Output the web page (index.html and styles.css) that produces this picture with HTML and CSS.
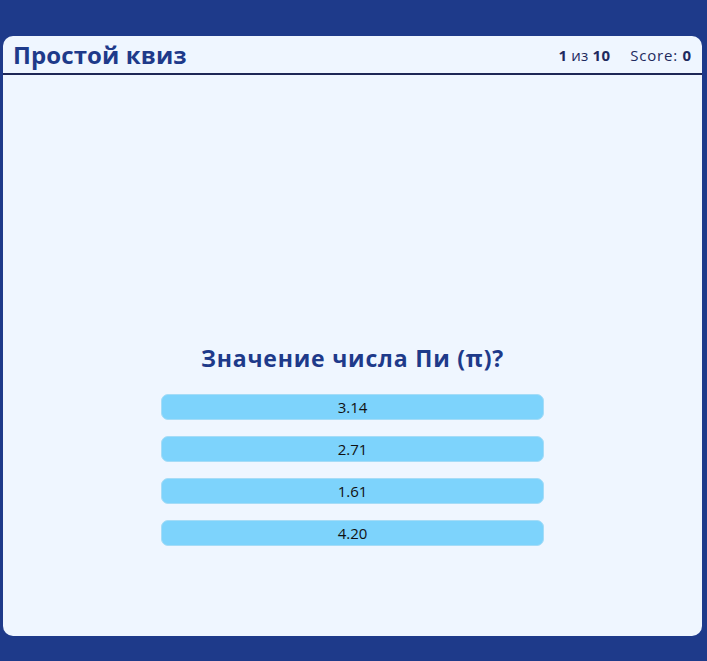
FILE: index.html
```html
<!DOCTYPE html>
<html lang="ru">
<head>
<meta charset="utf-8">
<title>Простой квиз</title>
<link rel="stylesheet" href="styles.css">
</head>
<body>
<div class="card">
  <header class="header">
    <h1 class="title">Простой квиз</h1>
    <div class="stats">
      <span class="progress"><b>1</b> из <b>10</b></span>
      <span class="score">Score: <b>0</b></span>
    </div>
  </header>
  <main class="main">
    <h2 class="question">Значение числа Пи (π)?</h2>
    <div class="answers">
      <button class="answer">3.14</button>
      <button class="answer">2.71</button>
      <button class="answer">1.61</button>
      <button class="answer">4.20</button>
    </div>
  </main>
</div>
</body>
</html>
```
FILE: styles.css
```css
html, body {
  margin: 0;
  padding: 0;
}
body {
  background: #1e3a8a;
  padding: 36px 5px 25px 3px;
  font-family: "Open Sans", "DejaVu Sans", sans-serif;
}
.card {
  background: #eff6ff;
  border-radius: 10px;
  height: 600px;
  display: flex;
  flex-direction: column;
}
.header {
  display: flex;
  justify-content: space-between;
  align-items: center;
  height: 37px;
  padding: 0 10px 0 10px;
  border-bottom: 2px solid #1e2756;
}
.title {
  margin: 0;
  font-size: 24px;
  font-weight: 700;
  color: #1e3a8a;
  letter-spacing: 0.1px;
}
.stats {
  display: flex;
  gap: 20px;
  font-size: 15px;
  color: #1e2a5e;
}
.progress {
  letter-spacing: 0.2px;
}
.score {
  letter-spacing: 0.8px;
}
.stats b {
  font-weight: 700;
}
.main {
  flex: 1;
  display: flex;
  flex-direction: column;
  align-items: center;
  padding-top: 268px;
}
.question {
  margin: 0;
  font-size: 23px;
  line-height: 30px;
  font-weight: 700;
  color: #1e3a8a;
  letter-spacing: 0.8px;
}
.answers {
  display: flex;
  flex-direction: column;
  gap: 16px;
  margin-top: 21px;
  width: 383px;
}
.answer {
  height: 26px;
  background: #7dd3fc;
  border: 1px solid #a5dcf7;
  border-radius: 7px;
  font-family: "Open Sans", "DejaVu Sans", sans-serif;
  font-size: 15px;
  color: #111;
  padding: 0;
}
```
